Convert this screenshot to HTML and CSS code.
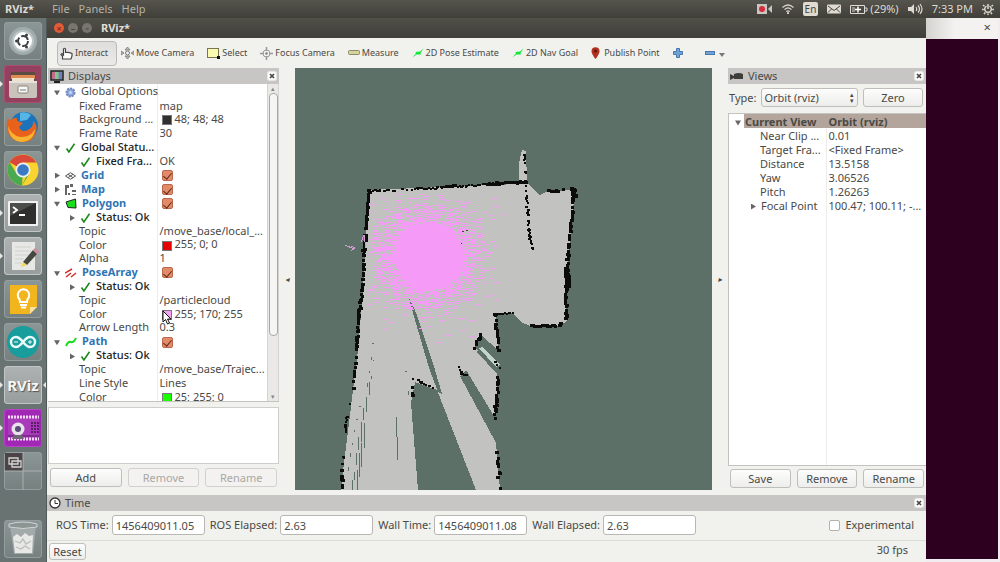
FILE: index.html
```html
<!DOCTYPE html>
<html lang="en">
<head>
<meta charset="utf-8">
<title>RViz*</title>
<link rel="stylesheet" href="styles.css">
</head>
<body>
<svg class="defs" aria-hidden="true">
  <symbol id="tick" viewBox="0 0 10 10"><path d="M1 5.5 3.4 9 9 .8" fill="none" stroke="#1d8a1d" stroke-width="1.6"/></symbol>
  <symbol id="nav" viewBox="0 0 12 10"><path d="M.5 9.5 4 5.200 3.500 4 8 3.500 11.500.5 8.500 5 9 6.500 4.500 6.500Z" fill="#12e83a"/></symbol>
  <symbol id="close" viewBox="0 0 10 10"><rect x=".5" y=".5" width="9" height="9" rx="2" fill="#fbfbfa" stroke="#e8e7e5"/><path d="m3 3 4 4m0-4L3 7" stroke="#4a4945" stroke-width="1.7"/></symbol>
</svg>
<header class="panel">
  <strong class="panel-title">RViz*</strong>
  <nav class="menus"><a href="#file">File</a><a href="#panels">Panels</a><a href="#help">Help</a></nav>
  <div class="tray">
    <svg width="16" height="10" viewBox="0 0 16 10"><path d="M0 0h10v10H0ZM11 5l4-4v8Z" fill="#c9c5c1"/><circle cx="5" cy="5" r="3" fill="#d92b39"/></svg>
    <svg width="12" height="10" viewBox="0 0 12 10" fill="none" stroke="#d9d6cf" stroke-width="1.200"><path d="M.5 3.500Q6-1.500 11.500 3.500M2.500 5.700Q6 2.200 9.500 5.700M4.300 7.600Q6 6 7.700 7.600"/><circle cx="6" cy="9" r=".5"/></svg>
    <span class="lang">En</span>
    <svg width="14" height="10" viewBox="0 0 14 10"><rect y=".5" width="14" height="9" rx="1" fill="#dfdbd2"/><path d="m1 2 6 4.500L13 2M1 8.500 4.500 5M13 8.500 9.500 5" fill="none" stroke="#45443f"/></svg>
    <span class="battery"><svg width="18" height="9" viewBox="0 0 18 9"><path d="M.5.5h14v8H.5ZM15 3h2v3h-2" fill="none" stroke="#dfdbd2"/><path d="M2 2h3v5H2Z" fill="#8e8c85"/><path d="M8 1.500v6M5 4.500h6" stroke="#fff" stroke-width="1.500"/></svg>(29%)</span>
    <svg width="15" height="12" viewBox="0 0 15 12"><path d="M0 4h3l3-3v10L3 8H0Z" fill="#dfdbd2"/><path d="M8 4q1.500 2 0 4M10 2.500q3 3.500 0 7M12 1q4 5 0 10" fill="none" stroke="#dfdbd2" stroke-width="1.200"/></svg>
    <time>7:33 PM</time>
    <svg width="12" height="12" viewBox="0 0 12 12" fill="none" stroke="#dfdbd2"><path d="M4.500 3.100a3.300 3.300 0 1 0 3 0M6 1v5" stroke-width="1.500"/><path d="M1 2l1.500 1.300M11 2 9.500 3.300M0 6.500h1.800M12 6.500h-1.800M2 11l1.300-1.500M10 11 8.700 9.500M6 12v-1.500" stroke-width="1.500"/></svg>
  </div>
</header>
<div class="desktop">
  <aside class="launcher">
    <button class="tile" aria-label="Dash"><svg viewBox="0 0 38 38"><circle cx="19" cy="19" r="14" fill="#a0abac"/><circle cx="19" cy="19" r="11" fill="#bcc4c3"/><circle cx="19" cy="19" r="9" fill="#fff"/><circle cx="19" cy="19" r="5" fill="none" stroke="#3d4042" stroke-width="2" stroke-dasharray="8.500 2"/><g fill="#3d4042"><circle cx="12.500" cy="19" r="1.500"/><circle cx="22.500" cy="13" r="1.500"/><circle cx="22.500" cy="25" r="1.500"/></g></svg></button>
    <button class="tile files runs" aria-label="Files"><svg viewBox="0 0 38 38"><path d="M7 7h24l1 11H6Z" fill="#5c4b40"/><path d="M7 10h24v4H7Z" fill="#e08a52"/><path d="M8 13h22v3H8Z" fill="#efe2cc"/><rect x="5" y="16" width="28" height="17" rx="2" fill="#c9c3bc"/><rect x="5" y="16" width="28" height="2" fill="#e5e1db"/><rect x="14" y="21" width="10" height="7" rx="1" fill="#f7f7f5" stroke="#89847e"/><path d="M16 25h6" stroke="#777"/></svg></button>
    <button class="tile" aria-label="Firefox"><svg viewBox="0 0 38 38"><circle cx="20" cy="18" r="14" fill="#1d73ba"/><path d="M16 5q6-2 11 2l-4 5-7 1Z" fill="#55b6e6"/><path d="M4 10q1 3 3 2 3-3 6-2-1 3 3 4l3 1-4 4q2 6 9 3 6-3 5-9 5 4 3 11-3 10-13 10Q5 33 3 21q-1-7 1-11Z" fill="#e9621c"/><path d="M4 18q3 9 12 11 10 1 15-8-1 12-13 13Q5 33 4 18Z" fill="#f8b430"/></svg></button>
    <button class="tile" aria-label="Chrome"><svg viewBox="0 0 38 38"><circle cx="19" cy="19" r="15.500" fill="#f9d32f"/><path d="M19 19 5.600 11.200A15.500 15.500 0 0 1 32.400 11.500H19Z" fill="#d94838"/><path d="M5.600 11.200A15.500 15.500 0 0 0 18 34.500L25.500 22.500H12.500Z" fill="#4aaa50"/><path d="M19 19h6.500L18 34.500" fill="#f9d32f"/><circle cx="19" cy="19" r="7.500" fill="#eef0ef"/><circle cx="19" cy="19" r="5.800" fill="#3b79c5"/></svg></button>
    <button class="tile light runs" aria-label="Terminal"><svg viewBox="0 0 38 38"><rect x="4" y="7" width="30" height="25" rx="1" fill="#f1f2f1"/><rect x="6" y="9" width="26" height="21" fill="#2f302e"/><path d="M6 9h26L6 22Z" fill="#4c4e4b"/><path d="m9 13 4 3-4 3M15 21h6" fill="none" stroke="#fff" stroke-width="1.800"/></svg></button>
    <button class="tile light runs" aria-label="Text editor"><svg viewBox="0 0 38 38"><path d="M8 5h23v28H8Z" fill="#e7e8e5"/><path d="M11 10h16M11 14h16M11 18h14M11 22h9M11 26h7" stroke="#cfd1d0"/><path d="m19 25 10-12 4 4-10 11Z" fill="#45483e"/><path d="m29 13 2-2 4 4-2 2Z" fill="#d48a9e"/><path d="m19 25 4 3-6 2Z" fill="#f1da55"/></svg></button>
    <button class="tile" aria-label="Keep"><svg viewBox="0 0 38 38"><path d="M6 5h27v22l-7 7H6Z" fill="#f2b51d"/><path d="M33 27v7h-7Z" fill="#7b8583"/><path d="M33 27h-7v7Z" fill="#fbe1a0"/><path d="M16 22q0-3-2-5a5.800 5.800 0 1 1 11 0q-2 2-2 5Zm0 3h7m-6 2.500h5" fill="none" stroke="#fff" stroke-width="2"/></svg></button>
    <button class="tile" aria-label="Arduino"><svg viewBox="0 0 38 38"><circle cx="19" cy="19" r="16" fill="#199c9c"/><path d="M19 19q-4-5-7-5a5 5 0 0 0 0 10q3 0 7-5t7-5a5 5 0 0 1 0 10q-3 0-7-5Z" fill="none" stroke="#eafafa" stroke-width="2.500"/><path d="M10 19h4m10 0h4m-2-2v4" stroke="#eafafa"/></svg></button>
    <button class="tile light runs active rviz">RViz</button>
    <button class="tile recorder runs" aria-label="Recorder"><svg viewBox="0 0 38 38"><rect x="4" y="7" width="31" height="24" rx="1" fill="#a93bbb"/><path d="M4 8h31M4 30h31" stroke="#f3d9f5" stroke-width="3" stroke-dasharray="2 1"/><path d="M4 27h31" stroke="#54205e"/><path d="M28 13v12m3-12v12m3-12v12" stroke="#5f1c6b" stroke-width="2" stroke-dasharray="2 1"/><circle cx="14" cy="20" r="6.500" fill="#e8e2ea"/><circle cx="14" cy="20" r="3" fill="#5a4a77"/><path d="M10 26h8l2 4H8Z" fill="#6f6676"/></svg></button>
    <button class="tile" aria-label="Workspaces"><svg viewBox="0 0 38 38"><path d="M1 1h18v18H1Z" fill="#4b4346"/><path d="M19 0v38M0 19h38" stroke="#aab0b0" stroke-width="1"/><path d="M5 6h9v6H5Zm3 3h9v6H8Z" fill="#4b4346" stroke="#d5d5d3" stroke-width="1.300"/></svg></button>
    <button class="tile trash" aria-label="Trash"><svg viewBox="0 0 38 38"><path d="M6 5h26l-3 29H10Z" fill="#a3abaa"/><path d="M5 4q14-4 28 0v3q-14 3-28 0Z" fill="#8d9593" stroke="#d0d5d3"/><path d="m9 17 4-3 4 3 4-4 4 3 4-1-1 18H11Z" fill="#e8e9e6"/><path d="m11 21 5 2 3-4 3 5 5-3M12 27l5 2 4-3 5 3" fill="none" stroke="#b9bdbb" stroke-width="1.300"/></svg></button>
  </aside>

  <main class="window">
    <div class="titlebar">
      <button class="dot shut" aria-label="Close">×</button><button class="dot" aria-label="Minimize">–</button><button class="dot" aria-label="Maximize">▫</button>
      <strong>RViz*</strong>
    </div>
    <div class="toolbar">
      <button class="tool pressed"><svg width="13" height="13" viewBox="0 0 13 13"><path d="M2.500 12V9L1 7.500l1-1L3.500 8V2q1-1.500 2 0v3.500Q9 5 12 6.500V9l-1 3Z" fill="#fff" stroke="#444" stroke-width="1.200"/></svg>Interact</button>
      <button class="tool"><svg width="13" height="12" viewBox="0 0 13 12" fill="none" stroke="#777"><path d="M6.500 0 9 3H4Zm0 12L9 9H4ZM0 4v4l3-2Zm13 0v4l-3-2Z" fill="#bbb" stroke-width=".8"/><circle cx="6.500" cy="6" r="2"/></svg>Move Camera</button>
      <button class="tool"><svg width="13" height="11" viewBox="0 0 13 11"><rect x=".5" y=".5" width="11" height="9" fill="#fafab0" stroke="#77774f"/><path d="M10 8h3v3h-3Z" fill="#111"/></svg>Select</button>
      <button class="tool"><svg width="13" height="13" viewBox="0 0 13 13" fill="none" stroke="#999"><circle cx="6.500" cy="6.500" r="3.500"/><circle cx="6.500" cy="6.500" r="1" fill="#777"/><path d="M6.500 0v4m0 5v4M0 6.500h4m5 0h4" stroke-width="1.500"/></svg>Focus Camera</button>
      <button class="tool"><svg width="12" height="6" viewBox="0 0 12 6"><rect x=".5" y=".5" width="11" height="4" rx="1" fill="#d5d59a" stroke="#8b8b70"/></svg>Measure</button>
      <button class="tool"><svg width="12" height="10"><use href="#nav"/></svg>2D Pose Estimate</button>
      <button class="tool"><svg width="12" height="10"><use href="#nav"/></svg>2D Nav Goal</button>
      <button class="tool pin"><svg width="9" height="12" viewBox="0 0 9 12"><path d="M4.500 12Q.5 7 .5 4.200a4 4 0 0 1 8 0Q8.500 7 4.500 12Z" fill="#b3301f"/><circle cx="4.500" cy="4" r="1.500" fill="#5b1710"/></svg>Publish Point</button>
      <button class="tool" aria-label="Add tool"><svg width="10" height="10" viewBox="0 0 10 10"><path d="M3.500.5h3v3h3v3h-3v3h-3v-3h-3v-3h3Z" fill="#6fa3d8" stroke="#4879ae"/></svg></button>
      <button class="tool minus" aria-label="Remove tool"><svg width="10" height="4" viewBox="0 0 10 4"><rect x=".5" y=".5" width="9" height="3" fill="#6fa3d8" stroke="#4879ae"/></svg><svg class="drop" width="6" height="4" viewBox="0 0 6 4"><path d="M0 0h6L3 4Z" fill="#777"/></svg></button>
    </div>

    <div class="work">
      <section class="displays">
        <h2 class="dock"><svg width="14" height="13" viewBox="0 0 14 13"><rect x="1" y="1" width="12" height="9" fill="#76a7a0" stroke="#222" stroke-width="1.500"/><path d="M2 2h3v7H2Z" fill="#c76a8b"/><path d="M5 2h3v7H5Z" fill="#7fc98b"/><path d="M9 2h3v7H9Z" fill="#7c79bc"/><path d="M4 12h6" stroke="#222" stroke-width="2"/></svg>Displays<button aria-label="Close Displays"><svg width="10" height="10"><use href="#close"/></svg></button></h2>
        <div class="tree-box">
          <div class="tree-view">
            <table class="tree">
              <tr><th><i class="open"></i><svg width="11" height="11" viewBox="0 0 11 11"><circle cx="5.500" cy="5.500" r="4" fill="#8fa9dc" stroke="#6b86bd" stroke-width="2" stroke-dasharray="2 1"/><circle cx="5.500" cy="5.500" r="1.500" fill="#c9d6f0"/></svg>Global Options</th><td></td></tr>
              <tr><th class="leaf">Fixed Frame</th><td>map</td></tr>
              <tr><th class="leaf">Background ...</th><td><b class="swatch dark"></b>48; 48; 48</td></tr>
              <tr><th class="leaf">Frame Rate</th><td>30</td></tr>
              <tr><th class="dark-text"><i class="open"></i><svg width="11" height="10"><use href="#tick"/></svg>Global Statu...</th><td></td></tr>
              <tr><th class="sub dark-text"><i></i><svg width="11" height="10"><use href="#tick"/></svg>Fixed Fra...</th><td>OK</td></tr>
              <tr><th class="name"><i class="shut"></i><svg width="11" height="8" viewBox="0 0 11 8" fill="none" stroke="#555"><path d="M.5 4 5.500.7 10.500 4l-5 3.300ZM3 2.300 8 5.700M8 2.300 3 5.700"/></svg>Grid</th><td><input type="checkbox" checked aria-label="Grid"></td></tr>
              <tr><th class="name"><i class="shut"></i><svg width="11" height="11" viewBox="0 0 11 11"><path d="M0 1h4v3H2v7H0ZM5 0h3v3H5ZM7 6h4v2H7ZM3 9h2v2H3ZM7 10h4v1H7Z" fill="#666"/></svg>Map</th><td><input type="checkbox" checked aria-label="Map"></td></tr>
              <tr><th class="name"><i class="open"></i><svg width="12" height="11" viewBox="0 0 12 11"><path d="M1 4 10.500 1 11 10 3 9.500Z" fill="#18e018" stroke="#222"/></svg>Polygon</th><td><input type="checkbox" checked aria-label="Polygon"></td></tr>
              <tr><th class="sub dark-text"><i class="shut"></i><svg width="11" height="10"><use href="#tick"/></svg>Status: Ok</th><td></td></tr>
              <tr><th class="leaf">Topic</th><td>/move_base/local_...</td></tr>
              <tr><th class="leaf">Color</th><td><b class="swatch red"></b>255; 0; 0</td></tr>
              <tr><th class="leaf">Alpha</th><td>1</td></tr>
              <tr><th class="name"><i class="open"></i><svg width="12" height="10" viewBox="0 0 12 10" stroke="#d03028" stroke-width="1.500"><path d="M0 5 7 1M1 9l5-4M6 9l5-4"/></svg>PoseArray</th><td><input type="checkbox" checked aria-label="PoseArray"></td></tr>
              <tr><th class="sub dark-text"><i class="shut"></i><svg width="11" height="10"><use href="#tick"/></svg>Status: Ok</th><td></td></tr>
              <tr><th class="leaf">Topic</th><td>/particlecloud</td></tr>
              <tr><th class="leaf">Color</th><td class="pointed"><b class="swatch pink"></b>255; 170; 255<svg class="cursor" width="10" height="15" viewBox="0 0 10 15"><path d="M1 1v11l2.500-2.500L5.500 14l2-1-2-4H9Z" fill="#fff" stroke="#111"/></svg></td></tr>
              <tr><th class="leaf">Arrow Length</th><td>0.3</td></tr>
              <tr><th class="name"><i class="open"></i><svg width="12" height="10" viewBox="0 0 12 10"><path d="M1 9Q3 4 6 5t5-4" fill="none" stroke="#1ddb1d" stroke-width="2"/></svg>Path</th><td><input type="checkbox" checked aria-label="Path"></td></tr>
              <tr><th class="sub dark-text"><i class="shut"></i><svg width="11" height="10"><use href="#tick"/></svg>Status: Ok</th><td></td></tr>
              <tr><th class="leaf">Topic</th><td>/move_base/Trajec...</td></tr>
              <tr><th class="leaf">Line Style</th><td>Lines</td></tr>
              <tr><th class="leaf">Color</th><td><b class="swatch green"></b>25; 255; 0</td></tr>
            </table>
          </div>
          <div class="scroll"><span>▴</span><div class="thumb"></div><span class="down">▾</span></div>
        </div>
        <div class="description"></div>
        <div class="buttons"><button>Add</button><button disabled>Remove</button><button disabled>Rename</button></div>
      </section>
      <div class="splitter"><i>◂</i></div>
      <svg class="render" viewBox="295 68 417 422" preserveAspectRatio="xMidYMid slice" role="img" aria-label="Occupancy map">
        <path class="free" d="M369 190 519 184 519 163 522 150 526 151 527 182 533 189 540 195 548 191 575 190 572 220 568 260 566 310 567 321 560 326 530 326 521 322 512 313 496 314 498 350 482 336 475 347 497 373 497 410 494 416 466 370 460 376 496 443 500 490 476 490 437 390 415 382 411 403 418 490 341 490 344 463 349 423 353 390 358 350 363 290 367 210Z"/>
        <path class="void" d="m409 298 6 12 18 53 9 31-4-2-9-24-14-48ZM485 343l15 14-3 17-20-22Z"/>
        <path class="haze" d="m483 347 17 18-4 2-17-19Z"/>
        <path class="trace" d="M369 382v13M366 397v15M363 408v12M361 422v20M364 423v25M358 437v13M361 443v24M356 453v12M359 453v24M354 472v8M357 470v20M352 480v10M372 343h2M371 357v3M373 360h1M369 371v2M371 376v3M367 383v4M359 406h2M356 419h2M354 430v2M352 443v2M350 453v4M348 467v4M396 417v20M397 437v23M405 371h2M408 391v4"/>
        <path class="scan" d="m455 237 3-3 4-2 6-2M457 246h4l3-3 4-1 5-3m-14 3 3 2"/>
        <g id="particles"></g>
        <g id="walls"></g>
        <path class="stray" d="m345 245 9 4m-3-3 4 2-4 3m10-9 3-7 2 13"/>
      </svg>
      <div class="splitter"><i>▸</i></div>
      <section class="views">
        <h2 class="dock"><svg width="14" height="9" viewBox="0 0 14 9"><path d="M0 2l4 2V2q5-2 9 0v5H4V6L0 8Z" fill="#3e3d3a"/></svg>Views<button aria-label="Close Views"><svg width="10" height="10"><use href="#close"/></svg></button></h2>
        <div class="type-row"><label for="type">Type:</label><span class="select"><select id="type"><option>Orbit (rviz)</option></select></span><button>Zero</button></div>
        <div class="view-tree">
          <table class="tree">
            <tr class="current"><th><i class="open"></i>Current View</th><td>Orbit (rviz)</td></tr>
            <tr><th class="leaf">Near Clip ...</th><td>0.01</td></tr>
            <tr><th class="leaf">Target Fra...</th><td>&lt;Fixed Frame&gt;</td></tr>
            <tr><th class="leaf">Distance</th><td>13.5158</td></tr>
            <tr><th class="leaf">Yaw</th><td>3.06526</td></tr>
            <tr><th class="leaf">Pitch</th><td>1.26263</td></tr>
            <tr><th class="sub"><i class="shut"></i>Focal Point</th><td>100.47; 100.11; -...</td></tr>
            <tr class="rest"><th></th><td></td></tr>
          </table>
        </div>
        <div class="buttons"><button>Save</button><button>Remove</button><button>Rename</button></div>
      </section>
    </div>

    <section class="time">
      <h2 class="dock"><svg width="12" height="12" viewBox="0 0 12 12" fill="#fff" stroke="#333"><circle cx="6" cy="6" r="5" stroke-width="1.300"/><path d="M6 3v3.500h3"/></svg>Time<button aria-label="Close Time"><svg width="10" height="10"><use href="#close"/></svg></button></h2>
      <div class="fields">
        <label for="rt">ROS Time:</label><input id="rt" type="text" value="1456409011.05">
        <label for="re">ROS Elapsed:</label><input id="re" type="text" value="2.63">
        <label for="wt">Wall Time:</label><input id="wt" type="text" value="1456409011.08">
        <label for="we">Wall Elapsed:</label><input id="we" type="text" value="2.63">
        <label class="experimental"><input type="checkbox">Experimental</label>
      </div>
    </section>
    <footer class="status"><button>Reset</button><span>30 fps</span></footer>
  </main>

  <aside class="behind"><div class="behind-bar">×</div><div class="purple"></div></aside>
</div>
<script src="map.js"></script>
</body>
</html>
```
FILE: styles.css
```css
* { box-sizing: border-box; }
body {
  margin: 0;
  height: 100vh;
  display: flex;
  flex-direction: column;
  overflow: hidden;
  font: 11px/14px "Noto Sans", "Open Sans", sans-serif;
  color: #4a4945;
  background: #f1f0ee;
}
button, input, select { font: inherit; color: inherit; margin: 0; }
button { padding: 0; border: 0; background: none; }
svg { flex: none; }
.defs { position: absolute; width: 0; height: 0; }

/* top panel */
.panel {
  flex: none;
  height: 18px;
  display: flex;
  align-items: center;
  padding: 0 6px 0 5px;
  background: linear-gradient(#55544d, #403f3a);
  color: #dfdbd2;
}
.panel-title { width: 47px; }
.menus { display: flex; gap: 9px; }
.menus a { color: #b5b2aa; text-decoration: none; }
.tray { margin-left: auto; display: flex; align-items: center; gap: 9px; }
.lang { padding: 0 2px; border-radius: 2px; background: #dfdbd2; color: #45443f; font-size: 10px; }
.battery { display: flex; align-items: center; gap: 2px; }

.desktop { flex: 1; min-height: 0; display: flex; }

/* launcher */
.launcher {
  width: 47px;
  flex: none;
  display: flex;
  flex-direction: column;
  gap: 5px;
  padding: 4px 5px 4px 4px;
  background: #697372;
  border-right: 1px solid #525a59;
}
.tile {
  position: relative;
  width: 38px;
  height: 38px;
  flex: none;
  border-radius: 4px;
  background: linear-gradient(#8b9696, #76807f);
  box-shadow: inset 0 0 0 1px #939d9d;
}
.tile svg { display: block; width: 38px; height: 38px; }
.light { background: linear-gradient(#aeb2b3, #979c9d); box-shadow: inset 0 0 0 1px #c1c5c5; }
.files { background: #95405f; box-shadow: inset 0 0 0 1px #a84e70; }
.recorder { background: #a127b5; box-shadow: inset 0 0 0 1px #b843ca; }
.rviz { color: #f5f5f3; font-size: 15px; font-weight: 700; text-shadow: 1px 1px 1px #555; }
.trash { margin-top: auto; }
.runs::before, .active::after {
  content: "";
  position: absolute;
  top: 16px;
  left: -4px;
  border: 3px solid transparent;
  border-left-color: #e8e8e6;
  border-right-width: 0;
}
.active::after { left: auto; right: -4px; border-left-width: 0; border-right: 3px solid #e8e8e6; }

/* window */
.window { flex: 1; min-width: 0; display: flex; flex-direction: column; background: #f1f1ee; }
.titlebar {
  height: 20px;
  flex: none;
  display: flex;
  align-items: center;
  gap: 4px;
  padding-left: 7px;
  background: linear-gradient(#504f48, #403f3a);
  color: #e2dfd7;
}
.titlebar strong { margin-left: 5px; }
.dot {
  width: 10px;
  height: 10px;
  border-radius: 50%;
  background: #77756d;
  color: #3a3934;
  font-size: 9px;
  line-height: 9px;
}
.dot.shut { background: #e65a36; color: #6d2412; }

.toolbar { flex: none; height: 30px; display: flex; align-items: center; gap: 13px; padding: 0 10px; }
.tool { display: flex; align-items: center; gap: 2px; font-size: 9px; white-space: nowrap; }
.pressed {
  height: 25px;
  padding: 0 8px 0 2px;
  margin-right: -9px;
  border: 1px solid #bbb9b5;
  border-radius: 4px;
  background: linear-gradient(#dfdedc, #ebeae8);
}
.pin { gap: 4px; }
.minus { gap: 4px; margin-left: 9px; }
.drop { margin-top: 4px; }

.work { flex: 1; min-height: 0; display: flex; padding-left: 1px; }
.dock {
  flex: none;
  height: 16px;
  margin: 0;
  display: flex;
  align-items: center;
  gap: 4px;
  padding: 0 2px 0 2px;
  background: #c7c6c4;
  font-size: 11px;
  font-weight: 400;
}
.dock button { margin-left: auto; display: flex; }
.displays { width: 231px; flex: none; display: flex; flex-direction: column; }
.tree-box { flex: 1; min-height: 0; display: flex; border-bottom: 1px solid #c5c3c0; background: #fff; }
.tree-view { flex: 1; min-width: 0; overflow: hidden; }

.tree { width: 100%; border-collapse: collapse; table-layout: fixed; line-height: 13px; }
.displays .tree { height: 319px; }
.tree th, .tree td { padding: 0; font-weight: 400; text-align: left; white-space: nowrap; vertical-align: middle; }
.tree th { width: 109px; border-right: 1px solid #eeedeb; }
.tree td { padding-left: 2px; overflow: hidden; }
.tree th svg { margin-right: 5px; vertical-align: middle; }
.tree th i { display: inline-block; width: 6px; height: 6px; margin: 0 5px 0 6px; vertical-align: middle; background: #666; }
.tree i.open { clip-path: polygon(0 1px, 100% 1px, 50% 100%); }
.tree i.shut { clip-path: polygon(1px 0, 100% 50%, 1px 100%); }
.tree th i:not([class]) { background: none; }
.tree .leaf { padding-left: 31px; }
.tree .sub { padding-left: 15px; }
.tree .dark-text { color: #222; font-weight: 500; }
.tree .name { color: #2e74b5; font-weight: 700; }
.swatch { display: inline-block; width: 10px; height: 10px; margin: 0 3px 0 2px; vertical-align: middle; border: 1px solid #777; }
.swatch.dark { background: #303030; }
.swatch.red { background: #e60000; }
.swatch.pink { background: #f5a0f5; }
.swatch.green { background: #19ff00; }
.tree .pointed { position: relative; overflow: visible; }
.cursor { position: absolute; left: 4px; top: 4px; }

input[type="checkbox"] {
  appearance: none;
  display: inline-grid;
  place-items: center;
  width: 11px;
  height: 11px;
  border: 1px solid #b3b1ad;
  border-radius: 2px;
  background: #fff;
  vertical-align: middle;
}
.tree input[type="checkbox"] { margin-left: 2px; background: #e58a68; border-color: #b8694c; }
.tree input[type="checkbox"]::after {
  content: "";
  width: 4px;
  height: 7px;
  border: solid #5b2a1b;
  border-width: 0 1px 1px 0;
  transform: rotate(40deg);
}

.scroll {
  width: 12px;
  display: flex;
  flex-direction: column;
  align-items: center;
  border: 1px solid #d5d3d0;
  border-width: 0 1px;
  background: #eae9e7;
  color: #8a8884;
  font-size: 7px;
  line-height: 9px;
}
.thumb { width: 9px; height: 243px; border: 1px solid #aaa8a4; border-radius: 4px; background: #f5f5f3; }
.down { margin-top: auto; }
.description { height: 57px; flex: none; margin-top: 5px; border: 1px solid #d0cecb; background: #fff; }
.buttons { flex: none; display: flex; gap: 6px; padding: 4px 2px 3px; }
.buttons button, .type-row button, .status button {
  flex: 1;
  height: 19px;
  border: 1px solid #c0beba;
  border-radius: 3px;
  background: linear-gradient(#fdfdfd, #ededeb);
}
.buttons button:disabled { color: #a9a7a3; border-color: #d3d1ce; background: #f3f2f0; }

.splitter { width: 16px; flex: none; display: grid; place-items: center; font-size: 8px; }
.render { flex: 1; min-width: 0; width: 0; height: 100%; background: #5c7067; shape-rendering: crispEdges; }
.free { fill: #c2c2c0; }
.void { fill: #5c7067; }
.haze { fill: #c3d4cf; }
.trace, .scan, .stray { fill: none; stroke: #5c7067; }
.scan { stroke: #444; stroke-dasharray: 3 1; }
.stray { stroke: #d49bd4; }
.walls { fill: #0c0c0c; }
.particles { fill: #f59bf7; }

.views { width: 198px; flex: none; display: flex; flex-direction: column; }
.type-row { display: flex; align-items: center; gap: 5px; padding: 4px 3px 6px 1px; }
.type-row button { flex: none; width: 60px; }
.select { position: relative; flex: 1; display: flex; }
.select::after {
  content: "▴\A▾";
  position: absolute;
  right: 4px;
  top: 4px;
  font-size: 7px;
  line-height: 6px;
  white-space: pre;
  pointer-events: none;
}
select {
  appearance: none;
  width: 100%;
  height: 19px;
  padding: 0 2px;
  border: 1px solid #c0beba;
  border-radius: 3px;
  background: linear-gradient(#fdfdfd, #ededeb);
}
.view-tree { flex: 1; min-height: 0; display: flex; border: 1px solid #c5c3c0; border-right: 0; background: #fff; }
.view-tree .tree { height: 100%; }
.view-tree tr { height: 14px; }
.view-tree .rest { height: auto; }
.view-tree th { width: 97px; }
.view-tree .current th { font-weight: 700; border-right-color: #b3a59c; background: linear-gradient(90deg, transparent 15px, #b3a59c 15px); }
.view-tree .current td { background: #b3a59c; font-weight: 700; }
.view-tree .current i { margin: 0 4px 0 6px; }
.views .buttons { padding: 3px 2px 2px; }

/* time dock */
.time { flex: none; margin-top: 5px; border-bottom: 1px solid #dddbd8; }
.fields { display: flex; align-items: center; padding: 4px 12px 5px 9px; }
.fields > input {
  width: 93px;
  height: 20px;
  margin: 0 5px 0 3px;
  padding: 0 3px;
  border: 1px solid #b9b7b3;
  border-radius: 3px;
  background: #fff;
}
.experimental { margin-left: auto; display: flex; align-items: center; gap: 5px; }
.status { flex: none; height: 21px; display: flex; justify-content: space-between; align-items: flex-start; padding: 2px 18px 0 2px; }
.status button { flex: none; width: 37px; height: 17px; }

/* window behind */
.behind { width: 74px; flex: none; display: flex; flex-direction: column; padding: 0 2px 3px 0; background: #f1ecef; }
.behind-bar { height: 21px; padding: 2px 7px 0 0; text-align: right; font-size: 13px; background: linear-gradient(90deg, #d5d3d0, #f3f2f0 40%); }
.purple { flex: 1; background: #2c001e; }
```
FILE: map.js
```js
const NS = 'http://www.w3.org/2000/svg';
let seed = 11;
const rnd = () => (seed = (seed * 16807) % 2147483647) / 2147483647;
const gauss = () => rnd() + rnd() + rnd() + rnd() - 2;

function fill(id, d) {
  const path = document.createElementNS(NS, 'path');
  path.setAttribute('d', d);
  path.setAttribute('class', id);
  document.getElementById(id).append(path);
}

// Occupied cells: [density, cell size, x, y, x, y, ...]
const walls = [
  [0.6, 2, 369, 191, 420, 189], [1, 2, 418, 189, 450, 187, 492, 184, 527, 182],
  [1, 3, 446, 187, 454, 186], [1, 3, 488, 184, 526, 182],
  [0.6, 2, 523, 150, 525, 160, 526, 182], [0.9, 3, 369, 191, 367, 215, 365, 250],
  [0.8, 3, 364, 250, 363, 285, 360, 310, 357, 346], [0.4, 3, 357, 346, 353, 388],
  [0.25, 2, 352, 390, 346, 435, 342, 470], [0.9, 2, 347, 418, 346, 432],
  [0.6, 3, 342, 470, 343, 488],
  [0.7, 2, 526, 186, 528, 215, 530, 238], [0.9, 2, 529, 228, 533, 250],
  [0.6, 3, 549, 191, 575, 190], [1, 4, 572, 189, 575, 195],
  [0.8, 3, 574, 192, 571, 225, 568, 260, 566, 300, 567, 318], [0.8, 5, 567, 268, 568, 285],
  [0.8, 3, 567, 316, 560, 326, 531, 326], [0.9, 2, 512, 313, 496, 314],
  [0.7, 3, 496, 314, 496, 328], [0.9, 3, 498, 330, 498, 350],
  [0.7, 3, 481, 334, 475, 348], [0.5, 2, 494, 361, 502, 371],
  [0.8, 2, 414, 379, 422, 382, 437, 390], [0.4, 3, 414, 382, 412, 402],
  [1, 2, 460, 368, 461, 374, 467, 375], [0.8, 3, 498, 378, 497, 405],
  [0.6, 3, 496, 405, 495, 420], [0.5, 3, 497, 448, 500, 488]
];
let cells = '';
for (const [density, size, ...p] of walls) {
  for (let i = 0; i + 3 < p.length; i += 2) {
    const dx = p[i + 2] - p[i], dy = p[i + 3] - p[i + 1];
    const steps = Math.ceil(Math.hypot(dx, dy) / 2);
    for (let s = 0; s <= steps; s++) {
      if (rnd() > density) continue;
      const w = rnd() < 0.3 ? size + 1 : size;
      const x = Math.round(p[i] + dx * s / steps - w / 2 + rnd() * 1.6 - 0.8);
      const y = Math.round(p[i + 1] + dy * s / steps - size / 2 + rnd() * 1.6 - 0.8);
      cells += `M${x} ${y}h${w}v${size}h${-w}Z`;
    }
  }
}
fill('walls', cells);

// Pose particles around the robot's estimate
let cloud = 'M398 240 408 226 432 222 454 230 464 250 462 272 446 288 420 292 402 278 394 258Z';
const scatter = (count, spread, cx, cy) => {
  for (let i = 0; i < count; i++) {
    const x = Math.round(cx + gauss() * spread), y = Math.round(cy + gauss() * spread);
    const w = 3 + Math.round(rnd() * 3);
    if (x > 366 && y > 193) cloud += `M${x} ${y}h${w}v1h${-w}Z`;
  }
};
scatter(3000, 38, 425, 255);
scatter(350, 56, 424, 262);
fill('particles', cloud);
```
